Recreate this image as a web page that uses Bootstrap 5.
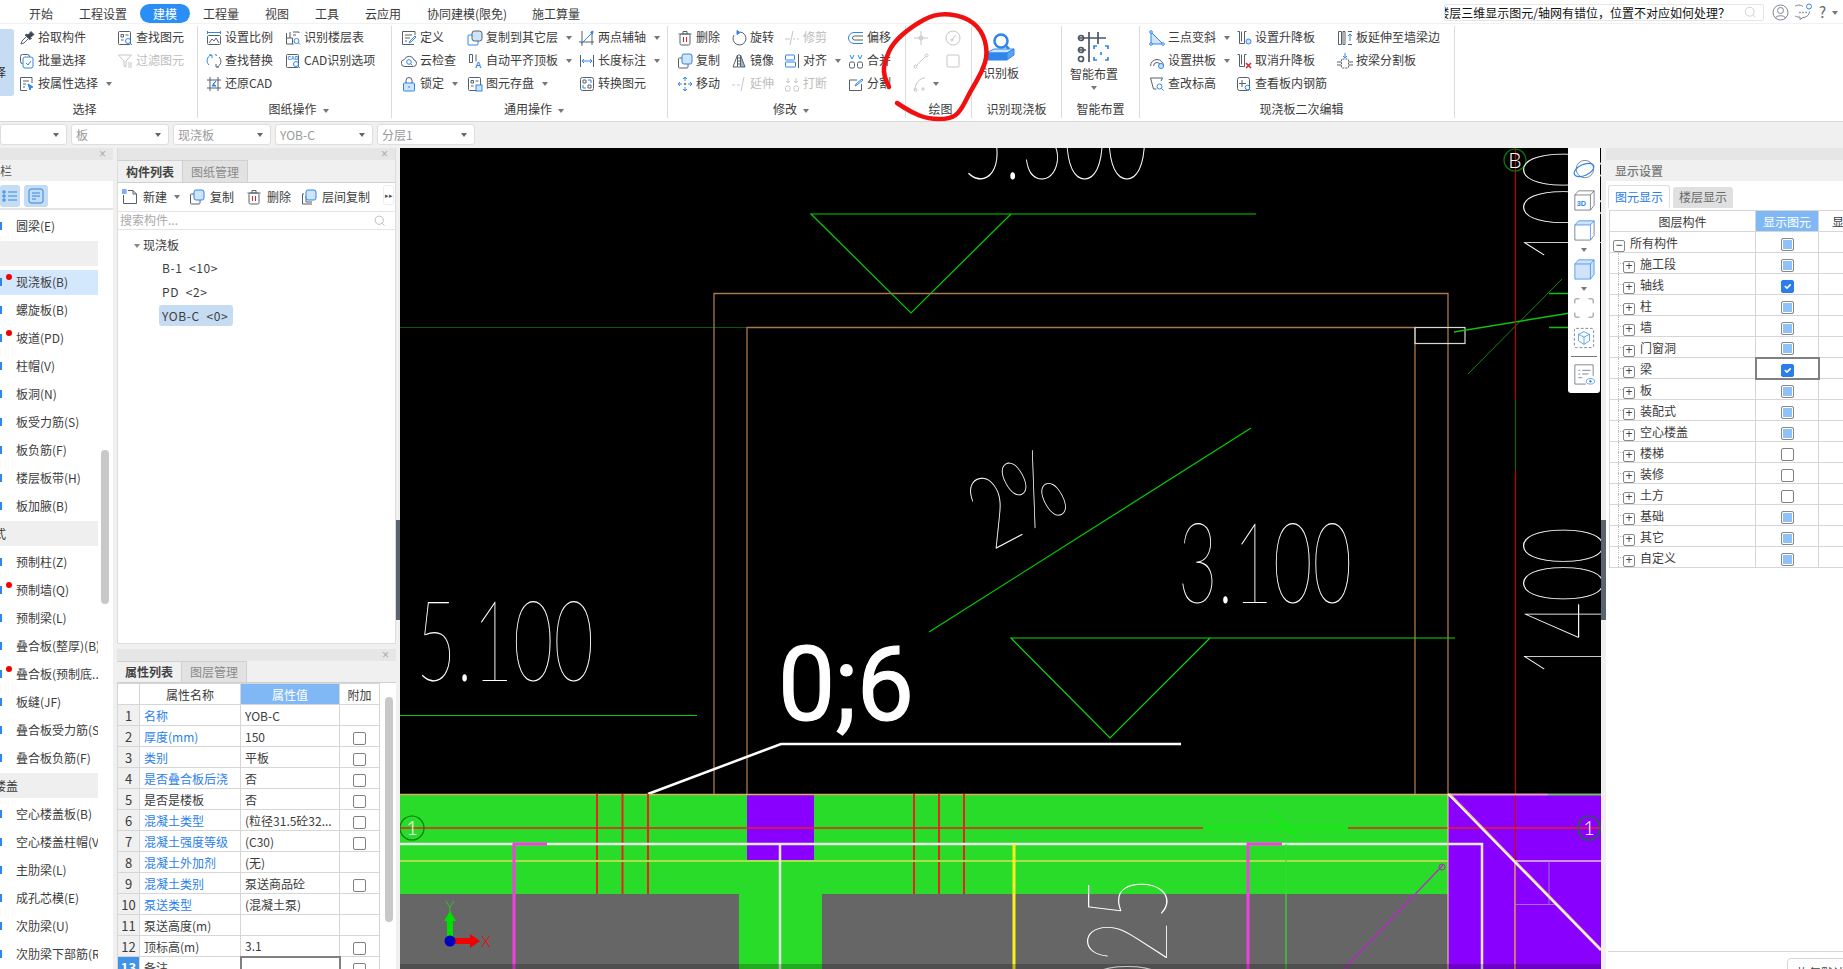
<!DOCTYPE html>
<html>
<head>
<title>建模</title>
<link href="https://cdn.jsdelivr.net/npm/bootstrap@5.3.3/dist/css/bootstrap.min.css" rel="stylesheet">
<style>
body { width:1843px; height:969px; overflow:hidden; background:#fff; color:#3c3c3c; font:12px/1.2 "Noto Sans CJK SC","Liberation Sans",sans-serif; }
svg.ico { width:16px; height:16px; flex:none; fill:none; stroke:#56606b; stroke-width:1; }
svg.dim { stroke:#c6c6c6; }
.b { stroke:#2f86ea; }
.r { stroke:#e02020; }
.bf { fill:#2f86ea; stroke:#2f86ea; }
.lf { fill:#cfe3fb; stroke:#2f86ea; }
.kf { fill:#3c4650; }
.mini { font:700 5px "Liberation Sans",sans-serif; fill:#2f86ea; stroke:none; }

.top-bar { height:23px; }
.tab-txt { width:62px; height:19px; margin-top:4px; line-height:19px; text-align:center; flex:none; }
.tab-on { width:50px; background:#2b8ef5; color:#fff; border-radius:10px; }
.ask { position:absolute; left:1444px; top:4px; width:320px; height:17px; border:1px solid #e6e6e6; border-radius:2px; color:#111; overflow:hidden; justify-content:flex-end; padding-right:33px; line-height:15px; white-space:nowrap; }
.ask span { flex:none; }
.top-ico { position:absolute; top:4px; }

.rib { height:98px; border-top:1px solid #f1f1f1; }
.rgroup { height:92px; margin-top:2px; border-right:1px solid #dcdcdc; flex:none; position:relative; }
.rbody { height:73px; }
.rcol { flex:none; }
.ritem { height:23px; gap:3px; white-space:nowrap; }
.ritem.off { color:#bdbdbd; }
.caret { width:0; height:0; border:3px solid transparent; border-top:4px solid #777; border-bottom:0; margin-left:5px; flex:none; }
.rlabel { height:19px; line-height:19px; text-align:center; color:#3c3c3c; }
.rlabel .caret { display:inline-block; vertical-align:middle; margin-left:6px; }
.pick-btn { width:14px; height:67px; margin-top:3px; margin-right:5px; background:#c5dcf3; border-radius:0 3px 3px 0; flex:none; overflow:hidden; color:#333; }
.pick-btn span { display:block; margin:36px 0 0 -6px; }

.cnd-bar { height:27px; background:#f0f0f0; border-top:1px solid #d8d8d8; padding-top:2px; gap:4px; }
.cnd-bar .form-select { height:21px; min-height:0; padding:0 14px 0 4px; font-size:12px; line-height:19px; color:#999; border:1px solid #dedede; border-radius:3px; background-color:#fff; background-size:8px 8px; background-position:right 6px center; background-image:url("data:image/svg+xml,%3csvg xmlns='http://www.w3.org/2000/svg' viewBox='0 0 8 8'%3e%3cpath fill='%23666' d='M1 2h6L4 6z'/%3e%3c/svg%3e"); flex:none; width:98px; }

.work { height:821px; background:#f0f0f0; }
.gut { width:4px; flex:none; }
.gut-mark { width:4px; height:100px; margin-top:372px; background:#5a6470; }
.gray-head { height:12px; background:#e6e6e6; position:relative; }
.gray-head i { position:absolute; right:7px; top:1px; font:normal 12px/10px "Liberation Sans",sans-serif; color:#aaa; }

.nav-pane { width:113px; flex:none; background:#fff; }
.nav-title { height:21px; line-height:21px; background:#f0f0f0; color:#555; font-size:12px; overflow:hidden; white-space:nowrap; }
.nav-title span { margin-left:-24px; display:inline-block; }
.nav-tools { height:29px; border-bottom:2px solid #e4e4e4; gap:4px; padding-top:4px; }
.tool-on { height:22px; background:#c5dcf3; border-radius:3px; flex:none; justify-content:center; align-items:center; display:flex; }
.nav-rows { width:98px; padding-top:2px; }
.nav-row { height:28px; line-height:28px; padding-left:16px; white-space:nowrap; overflow:hidden; position:relative; }
.nav-row.sel::before { content:""; position:absolute; left:0; right:0; top:2px; bottom:1px; background:#d3e7fd; z-index:0; }
.nav-row span { position:relative; }
.nav-sec { height:25px; line-height:25px; margin:1px 0 2px; background:#efefef; white-space:nowrap; overflow:hidden; }
.nav-sec span { margin-left:-6px; display:inline-block; }
.nav-dot { position:absolute; left:6px; top:6px; width:6px; height:6px; border-radius:50%; background:#f00000; }
.nav-stub { position:absolute; left:0; top:10px; width:2px; height:8px; background:#2f86ea; }
.nav-track { width:15px; flex:none; padding-left:3px; }
.nav-thumb { width:8px; height:154px; margin-top:240px; background:#c8c8c8; border-radius:4px; }

.mid-pane { width:279px; flex:none; }
.list-pane { height:496px; background:#fff; border:1px solid #dcdcdc; border-top:0; }
.prop-pane { height:320px; margin-top:5px; background:#fff; overflow:hidden; }
.pane-tabs { height:23px; background:#f0f0f0; border-bottom:1px solid #d0d0d0; }
.prop-pane .pane-tabs { height:22px; }
.pane-tab { width:65px; height:23px; line-height:21px; text-align:center; border:1px solid #d0d0d0; flex:none; }
.prop-pane .pane-tab { height:22px; line-height:20px; }
.pane-tab.act { font-weight:700; background:#f0f0f0; color:#444; border-left:0; }
.pane-tab.idle { background:#e2e2e2; color:#8a8a8a; border-left:0; }
.list-tools { height:28px; position:relative; }
.list-tool { gap:5px; white-space:nowrap; flex:none; }
.more-btn { position:absolute; right:1px; top:2px; width:11px; height:20px; border:1px solid #eee; border-radius:3px; background:#fff; font-size:7px; line-height:18px; text-align:center; color:#555; }
.find-row { height:19px; border-top:1px solid #e4e4e4; border-bottom:1px solid #e4e4e4; color:#aaa; padding:0 9px 0 2px; }
.tree-top { padding:7px 0 0 16px; height:27px; line-height:16px; }
.tree-top .caret { margin:0 3px 2px 0; display:inline-block; border-top-color:#888; }
.tree-leaf { height:24px; line-height:21px; padding-left:44px; white-space:pre; letter-spacing:.6px; }
.tree-leaf span { display:inline-block; height:21px; padding:0 5px 0 3px; margin-left:-3px; border-radius:3px; }
.tree-leaf.sel span { background:#c5dcf3; }

.prop-table, .layer-table { table-layout:fixed; border-collapse:collapse; margin:0; }
.prop-table { width:262px; }
.prop-table td, .prop-table th, .layer-table td, .layer-table th { height:21px; padding:0 4px; border:1px solid #d6d6d6; font-weight:400; white-space:nowrap; overflow:hidden; line-height:19px; color:#3c3c3c; background:#fff; vertical-align:middle; }
.prop-table th { text-align:center; }
.prop-table .no { background:#f0f0f0; text-align:center; padding:0; font-size:13px; }
.prop-table .no.on { background:#3f93ea; color:#fff; font-weight:700; }
.prop-table .blue { color:#2b7fe8; }
.prop-table .hd, .layer-table .hd { background:#7fb8f5; color:#fff; }
.prop-table .mid { text-align:center; padding:0; }
.prop-table .cur { border:2px solid #808080; }
.prop-scroll { width:17px; flex:none; padding-left:5px; }
.prop-thumb { width:8px; height:225px; margin-top:14px; background:#c8c8c8; border-radius:4px; }
.form-check-input.ck { width:13px; height:13px; margin:0; vertical-align:middle; border:1px solid #808080; border-radius:2px; float:none; display:inline-block; }
.form-check-input.ck:checked { background-color:#2b7de9; border-color:#2b7de9; }
.form-check-input.ck.part { background-color:#8fc1fb; box-shadow:inset 0 0 0 1px #fff; border-color:#888; }

.cad-view { width:1201px; flex:none; position:relative; overflow:hidden; background:#000; }
.cad-view > svg { display:block; }
.cad { font-family:Lato,Roboto,sans-serif; font-weight:100; font-size:112px; fill:#fff; }
.float-bar { position:absolute; right:1px; top:0; width:32px; height:245px; background:#fff; border-radius:0 0 3px 3px; padding-top:11px; }
.float-bar svg.ico { width:22px; height:22px; stroke-width:.8; display:block; margin:0 auto 8px; }
.float-bar .caret { margin:-1px auto 6px; display:block; }
.float-bar hr { margin:-1px 3px 6px; border-top:1px solid #777; opacity:1; }

.show-pane { width:237px; flex:none; background:#fff; position:relative; }
.show-title { height:21px; line-height:21px; background:#f0f0f0; padding-left:9px; color:#777; font-weight:500; }
.show-tabs { height:25px; padding:4px 0 0 2px; gap:3px; border-bottom:0; }
.show-tabs .nav-link, .show-tabs .nav-link.active { height:23px; line-height:21px; padding:0; width:62px; text-align:center; font-size:12px; color:#2b7de9; border:1px solid #ddd; border-bottom-color:#fff; border-radius:3px 3px 0 0; background:#fff; }
.show-tabs .nav-link.idle { width:60px; margin-top:2px; height:21px; line-height:19px; background:#e0e0e0; color:#6a6a6a; border:0; }
.layer-table { width:260px; margin:4px 0 0 3px; }
.layer-table th { text-align:center; }
.layer-table .mid { text-align:center; padding:0; }
.layer-table .cur { border:2px solid #808080; }
.layer-name { padding:0 !important; position:relative; }
.layer-name:not(.root)::before { content:""; position:absolute; left:8px; top:0; bottom:0; border-left:1px dotted #bbb; }
.layer-name:not(.root)::after { content:""; position:absolute; left:8px; top:10px; width:5px; border-top:1px dotted #bbb; }
.layer-name .plus { display:inline-block; width:12px; height:12px; border:1px solid #888; border-radius:2px; text-align:center; font:12px/9px "Liberation Sans",sans-serif; color:#444; margin:0 5px 0 13px; vertical-align:-1px; background:#fff; }
.layer-name.root .plus { margin:0 5px 0 3px; }
.tail-line { border-top:1px solid #d6d6d6; position:absolute; left:2px; right:0; top:803px; }
.reset-btn { position:absolute; left:181px; top:810px; width:70px; height:20px; border:1px solid #d6d6d6; border-radius:4px; background:#fff; padding:6px 0 0 9px; color:#444; font-size:12px; line-height:15px; white-space:nowrap; }
.ink { position:absolute; left:0; top:0; pointer-events:none; }
</style>
</head>
<body>
<svg width="0" height="0" class="position-absolute">
<defs>
<symbol id="i-pick" viewBox="0 0 16 16"><path d="M2 14l1-3 5-5 2 2-5 5z"/><path class="kf" d="M8 4l1 1 3-3.500 3 3-3.500 3 1 1-2 1-4.500-4.500z"/></symbol>
<symbol id="i-find" viewBox="0 0 16 16"><rect x="1.500" y="1.500" width="12" height="13" rx="1"/><path d="M4 4.500h2.500v2.500H4zM8.500 5h3M4 10h2.500"/><circle class="b" cx="11" cy="11" r="2.500"/><path class="b" d="M13 13l2 2"/></symbol>
<symbol id="i-batch" viewBox="0 0 16 16"><rect x="1.500" y="1.500" width="9" height="9" rx="2"/><rect class="b" x="4" y="4" width="10" height="11" rx="2" fill="#fff"/><path class="b" d="M7 10l2 2 3-4"/></symbol>
<symbol id="i-filter" viewBox="0 0 16 16"><path d="M1.500 2h13L9 8v6l-2-1V8zM11 10h4M11 12h4M11 14h4"/></symbol>
<symbol id="i-attr" viewBox="0 0 16 16"><path d="M13 7V1.500H1.500v13H8M4 5h6M4 8h3M4 11h2"/><path class="bf" d="M9 8l5 3-2 .6-1 2.400z"/></symbol>
<symbol id="i-scale" viewBox="0 0 16 16"><path class="b" d="M1.500 1v3M14.500 1v3M1.500 2.500h13"/><rect x="1.500" y="5.500" width="13" height="9" rx="1"/><path d="M3 13l3-4 2 2 2-3 3 5"/></symbol>
<symbol id="i-swap" viewBox="0 0 16 16"><path class="b" d="M5 2a6 6 0 0 0-2 10M3 2h3v3"/><path d="M11 14a6 6 0 0 0 2-10M13 14h-3v-3M9 1.500l2 1"/></symbol>
<symbol id="i-restore" viewBox="0 0 16 16"><path d="M4 1v14M12 1v14M1 4h14M1 12h14"/><path class="bf" d="M10 5L7 8l3 2-4 0z"/></symbol>
<symbol id="i-floor" viewBox="0 0 16 16"><path d="M1.500 3v11h7M1.500 8h6v6M5 2v6M8 2h6v1M8 5h3"/><circle class="b" cx="11.500" cy="11" r="2.500"/><path class="b" d="M13.500 13l1.500 1.500"/></symbol>
<symbol id="i-cadopt" viewBox="0 0 16 16"><rect x="1.500" y="1.500" width="12" height="13" rx="1"/><text class="mini" x="2.500" y="7">CAD</text><circle class="b" cx="11" cy="11" r="2.500"/><path class="b" d="M13 13l2 2"/></symbol>
<symbol id="i-def" viewBox="0 0 16 16"><path d="M14 5V1.500H1.500v13H13M4 5h7M4 8h5M4 11h2"/><path class="b" d="M8 13l1-2 5-5 1 1-5 5z"/></symbol>
<symbol id="i-cloud" viewBox="0 0 16 16"><path d="M4 13.500a3.500 3.500 0 0 1-.5-7 5 5 0 0 1 9.500.5 3.300 3.300 0 0 1-.5 6.500z"/><circle class="b" cx="8" cy="9" r="2.300"/><path class="b" d="M9.500 10.500l2 2"/></symbol>
<symbol id="i-lock" viewBox="0 0 16 16"><rect class="lf" x="2.500" y="7" width="11" height="8" rx="1"/><path d="M5 7V4.500a3 3 0 0 1 6 0V7"/><path class="b" d="M8 10v2"/></symbol>
<symbol id="i-copylayer" viewBox="0 0 16 16"><path d="M5 5H2a1 1 0 0 0-1 1v8a1 1 0 0 0 1 1h8a1 1 0 0 0 1-1v-3" class="b"/><rect x="5" y="1" width="10" height="10" rx="2.500" fill="#cfe3fb"/></symbol>
<symbol id="i-align" viewBox="0 0 16 16"><path d="M2.500 1.500v8h3v-8zM9 1.500v7"/><text class="mini" style="font-size:9px" x="8" y="15">A</text></symbol>
<symbol id="i-save" viewBox="0 0 16 16"><rect x="1.500" y="1.500" width="12" height="13" rx="1"/><path d="M4 4.500h2.500V7H4zM8.500 5h3M4 10h2.500"/><rect class="lf" x="9" y="9" width="6" height="6"/></symbol>
<symbol id="i-axis" viewBox="0 0 16 16"><path d="M3 1v15M0 12h15M13 1v14"/><path class="b" d="M2 14L14 2"/><path class="bf" d="M14 1l-.5 3-2-1.500z"/></symbol>
<symbol id="i-dim" viewBox="0 0 16 16"><path d="M1.500 2v12M14.500 2v12"/><path class="b" d="M3 8h10M3 8l2-2M3 8l2 2M13 8l-2-2M13 8l-2 2"/></symbol>
<symbol id="i-conv" viewBox="0 0 16 16"><rect x="1.500" y="1.500" width="13" height="13" rx="2"/><path d="M4 4h3v3H4zM9 9h3v3H9z"/><path class="b" d="M9 4h3v3M7 12H4V9"/></symbol>
<symbol id="i-del" viewBox="0 0 16 16"><rect x="3" y="4" width="10" height="11" rx="1.500"/><path d="M1.500 4h13M6 4V1.500h4V4"/><path class="r" d="M6.500 7v5M9.500 7v5"/></symbol>
<symbol id="i-copy" viewBox="0 0 16 16"><path d="M5 5H2.500a1 1 0 0 0-1 1v8a1 1 0 0 0 1 1H10a1 1 0 0 0 1-1v-3"/><rect class="lf" x="5" y="1" width="10" height="10" rx="2"/></symbol>
<symbol id="i-move" viewBox="0 0 16 16"><path class="b" d="M8 1v4M8 11v4M1 8h4M11 8h4M6 3l2-2 2 2M6 13l2 2 2-2M3 6L1 8l2 2M13 6l2 2-2 2"/><circle cx="8" cy="8" r=".8"/></symbol>
<symbol id="i-rot" viewBox="0 0 16 16"><path d="M9 2a6.500 6.500 0 1 1-6 3"/><path class="bf" d="M6 .5v4l3-2z"/></symbol>
<symbol id="i-mirror" viewBox="0 0 16 16"><path d="M6.500 2L2 14h4.500z"/><path d="M8 1v14" stroke-dasharray="2 1"/><path fill="#9fb6cf" d="M9.500 2L14 14H9.500z"/></symbol>
<symbol id="i-trim" viewBox="0 0 16 16"><path d="M1 9h5M9 9h2M13 9h2M9 1L6 15"/></symbol>
<symbol id="i-extend" viewBox="0 0 16 16"><path d="M1 9h3M6 9h3M13 1l-3 14"/></symbol>
<symbol id="i-alignb" viewBox="0 0 16 16"><rect class="b" x="1.500" y="2" width="9" height="5" rx=".5"/><rect class="b" x="1.500" y="9" width="10" height="5" rx=".5"/><path d="M14.500 1v14"/></symbol>
<symbol id="i-break" viewBox="0 0 16 16"><rect x="1.500" y="10" width="4.500" height="5" rx="1.500"/><rect x="10" y="10" width="4.500" height="5" rx="1.500"/><path d="M4 2v5M2 5l2 2 2-2M12 2v5M10 5l2 2 2-2"/></symbol>
<symbol id="i-offset" viewBox="0 0 16 16"><path class="b" d="M15 2.500H6a5.500 5.500 0 0 0 0 11h9"/><path d="M15 6H6.500a2 2 0 0 0 0 4H15"/></symbol>
<symbol id="i-merge" viewBox="0 0 16 16"><rect x="1.500" y="9" width="5" height="6" rx="1.500"/><rect x="9.500" y="9" width="5" height="6" rx="1.500"/><path class="b" d="M2 2l2 4 2-4M10 2l2 4 2-4"/></symbol>
<symbol id="i-split" viewBox="0 0 16 16"><path d="M9 4H1.500v10.500h12V8"/><path class="b" d="M7 10l1-2 6-5 1 1-6 5z"/></symbol>
<symbol id="i-pt" viewBox="0 0 16 16"><path d="M8 1v14M1 8h14"/><circle cx="8" cy="8" r="2"/></symbol>
<symbol id="i-gauge" viewBox="0 0 16 16"><circle cx="8" cy="8" r="7"/><path d="M7 10l4-5"/><circle cx="7" cy="10" r="1"/></symbol>
<symbol id="i-line" viewBox="0 0 16 16"><path d="M3 13L13 3"/><circle cx="2.500" cy="13.500" r="1.500"/><circle cx="13.500" cy="2.500" r="1.500"/></symbol>
<symbol id="i-rect" viewBox="0 0 16 16"><rect x="2" y="2" width="12" height="12" rx="1"/></symbol>
<symbol id="i-arc" viewBox="0 0 16 16"><path d="M2 14C2 7 7 2 12 2"/><circle cx="2.500" cy="14" r="1.500"/><circle cx="10" cy="13" r="1.200"/></symbol>
<symbol id="i-slope" viewBox="0 0 16 16"><path class="lf" d="M2 2v12h12z"/><circle class="b" cx="2" cy="14" r="1.300" fill="#fff"/><circle class="b" cx="14" cy="14" r="1.300" fill="#fff"/><circle class="b" cx="2" cy="2" r="1.300" fill="#fff"/></symbol>
<symbol id="i-arch" viewBox="0 0 16 16"><path d="M1.500 13a6.500 6.500 0 0 1 13 0M4.500 13a3.500 3.500 0 0 1 7 0"/><circle class="lf" cx="12" cy="13" r="2.500"/></symbol>
<symbol id="i-elev" viewBox="0 0 16 16"><path d="M1.500 2h12L12 5M1.500 2l3 11h3"/><circle class="b" cx="10.500" cy="10.500" r="2.500"/><path class="b" d="M12.500 12.500l2 2"/></symbol>
<symbol id="i-rise" viewBox="0 0 16 16"><path d="M1.500 1.500h2v12h5v-12h2M5.500 1.500v10"/><circle class="lf" cx="12.500" cy="11.500" r="2.500"/></symbol>
<symbol id="i-unrise" viewBox="0 0 16 16"><path d="M1.500 1.500h2v12h5v-12h2M5.500 1.500v10"/><path class="r" d="M10 10l5 5M15 10l-5 5" stroke-width="1.500"/></symbol>
<symbol id="i-rebar" viewBox="0 0 16 16"><rect x="1.500" y="1.500" width="12" height="13" rx="2"/><path d="M6 4v7M3 7.500h7"/><circle class="b" cx="11.500" cy="11.500" r="2.300"/><path class="b" d="M13.300 13.300l1.500 1.500"/></symbol>
<symbol id="i-extw" viewBox="0 0 16 16"><path d="M1.500 1.500h3v13h-3zM6 1.500h2v13H6zM11 1.500h4M11 14.500h4"/><path class="b" d="M13 11V4M11 6l2-2 2 2"/></symbol>
<symbol id="i-splitb" viewBox="0 0 16 16"><rect x="4.500" y="6" width="7" height="9" rx="1" stroke-dasharray="2 1"/><path d="M0 9h4M12 9h4M0 12h4M12 12h4"/><path class="b" d="M8 0v5M6 3l2 2 2-2"/></symbol>
<symbol id="i-new" viewBox="0 0 16 16"><path d="M6 1.500h5l3.500 3.500v9.500h-13V6M11 1.500V5h3.500"/><path class="b" d="M0 0h5M0 2h5M0 4h5M1 0v5M3 0v5" stroke-width=".8"/></symbol>
<symbol id="i-layercopy" viewBox="0 0 16 16"><path d="M3 5H1.500v10H11M5 7v6h6"/><rect class="lf" x="5" y="1" width="10" height="10" rx="2"/></symbol>
<symbol id="i-search" viewBox="0 0 16 16"><circle cx="7" cy="7" r="5.500"/><path d="M11 11l3 3"/></symbol>
<symbol id="i-list" viewBox="0 0 16 16"><path class="b" d="M1 3h2v2H1zM1 7h2v2H1zM1 11h2v2H1zM6 4h9M6 8h9M6 12h9"/></symbol>
<symbol id="i-form" viewBox="0 0 16 16"><rect class="b" x="1" y="1" width="14" height="14" rx="2"/><path class="b" d="M4 5h8M4 8h8M4 11h4"/></symbol>
<symbol id="i-orbit" viewBox="0 0 24 24"><circle cx="13" cy="11" r="9.500"/><ellipse class="b" cx="12" cy="12" rx="11.500" ry="6" transform="rotate(-25 12 12)" stroke-width="1.300"/></symbol>
<symbol id="i-3d" viewBox="0 0 24 24"><path d="M2 6.500h17V23H2zM2 6.500L6 2h17v16l-4 5M19 6.500L23 2"/><text class="mini" style="font-size:8px" x="4" y="19">3D</text></symbol>
<symbol id="i-cube" viewBox="0 0 24 24"><path d="M2 6.500V23h17l4-5V2"/><path class="lf" d="M2 6.500L6 2h17l-4 4.500zM19 6.500V23"/></symbol>
<symbol id="i-cube2" viewBox="0 0 24 24"><path class="lf" d="M2 6.500L6 2h17v16l-4 5H2z"/><path class="b" d="M2 6.500h17V23M19 6.500L23 2"/></symbol>
<symbol id="i-frame" viewBox="0 0 24 24"><path d="M2 7V3a1 1 0 0 1 1-1h4M17 2h4a1 1 0 0 1 1 1v4M22 17v4a1 1 0 0 1-1 1h-4M7 22H3a1 1 0 0 1-1-1v-4"/></symbol>
<symbol id="i-dashcube" viewBox="0 0 24 24"><rect x="1.500" y="1.500" width="21" height="21" rx="2" stroke-dasharray="3 2"/><path class="b" d="M12 5l6 3v7l-6 4-6-4V8zM6 8l6 3 6-3M12 11v8"/></symbol>
<symbol id="i-listeye" viewBox="0 0 24 24"><path d="M22 14V2H2v21h12M6 8h2M10 8h9M6 12h2M10 12h7M6 16h4"/><ellipse class="b" cx="19" cy="20" rx="4.500" ry="3"/><circle class="bf" cx="19" cy="20" r="1"/></symbol>
</defs>
</svg>

<div class="top-bar d-flex position-relative">
  <div class="flex-none" style="width:10px"></div>
  <div class="tab-txt" style="width:62px">开始</div>
  <div class="tab-txt" style="width:62px">工程设置</div>
  <div class="tab-txt tab-on" style="margin-left:6px">建模</div>
  <div class="tab-txt" style="width:62px">工程量</div>
  <div class="tab-txt" style="width:50px">视图</div>
  <div class="tab-txt" style="width:50px">工具</div>
  <div class="tab-txt" style="width:62px">云应用</div>
  <div class="tab-txt" style="width:106px">协同建模(限免)</div>
  <div class="tab-txt" style="width:72px">施工算量</div>
  <div class="ask d-flex"><span>楼层三维显示图元/轴网有错位，位置不对应如何处理？</span></div>
  <svg class="ico top-ico dim" style="left:1744px;top:6px;width:13px;height:13px"><use href="#i-search"/></svg>
  <svg class="top-ico" style="left:1772px" width="17" height="17" viewBox="0 0 17 17" fill="none" stroke="#7b8490"><circle cx="8.500" cy="8.500" r="7.500"/><circle cx="8.500" cy="6.500" r="3"/><path d="M3.500 14c1-3 9-3 10 0"/></svg>
  <svg class="top-ico" style="left:1795px;top:3px" width="18" height="17" viewBox="0 0 18 17" fill="none" stroke="#7b8490"><path d="M8 3.500a6.500 6 0 1 0-3 10.500v2.500l3-2a6.500 6 0 0 0 6.500-6"/><circle cx="5" cy="9.500" r=".5"/><circle cx="8" cy="9.500" r=".5"/><circle cx="11" cy="9.500" r=".5"/><circle cx="14" cy="3.500" r="2.500" stroke="#2f86ea"/></svg>
  <span class="top-ico" style="left:1819px;top:3px;font-size:15px;line-height:17px;color:#666">?</span>
  <span class="caret top-ico" style="left:1827px;top:11px"></span>
</div>

<div class="rib d-flex position-relative">
  <div class="rgroup" style="width:198px">
    <div class="rbody d-flex">
      <div class="pick-btn"><span>择</span></div>
      <div class="rcol" style="width:98px">
        <div class="ritem d-flex align-items-center"><svg class="ico"><use href="#i-pick"/></svg>拾取构件</div>
        <div class="ritem d-flex align-items-center"><svg class="ico"><use href="#i-batch"/></svg>批量选择</div>
        <div class="ritem d-flex align-items-center"><svg class="ico"><use href="#i-attr"/></svg>按属性选择<i class="caret"></i></div>
      </div>
      <div class="rcol">
        <div class="ritem d-flex align-items-center"><svg class="ico"><use href="#i-find"/></svg>查找图元</div>
        <div class="ritem off d-flex align-items-center"><svg class="ico dim"><use href="#i-filter"/></svg>过滤图元</div>
      </div>
    </div>
    <div class="rlabel" style="padding-right:28px">选择</div>
  </div>
  <div class="rgroup" style="width:194px;padding-left:8px">
    <div class="rbody d-flex">
      <div class="rcol" style="width:79px">
        <div class="ritem d-flex align-items-center"><svg class="ico"><use href="#i-scale"/></svg>设置比例</div>
        <div class="ritem d-flex align-items-center"><svg class="ico"><use href="#i-swap"/></svg>查找替换</div>
        <div class="ritem d-flex align-items-center"><svg class="ico"><use href="#i-restore"/></svg>还原CAD</div>
      </div>
      <div class="rcol">
        <div class="ritem d-flex align-items-center"><svg class="ico"><use href="#i-floor"/></svg>识别楼层表</div>
        <div class="ritem d-flex align-items-center"><svg class="ico"><use href="#i-cadopt"/></svg>CAD识别选项</div>
      </div>
    </div>
    <div class="rlabel">图纸操作<i class="caret"></i></div>
  </div>
  <div class="rgroup" style="width:276px;padding-left:9px">
    <div class="rbody d-flex">
      <div class="rcol" style="width:66px">
        <div class="ritem d-flex align-items-center"><svg class="ico"><use href="#i-def"/></svg>定义</div>
        <div class="ritem d-flex align-items-center"><svg class="ico"><use href="#i-cloud"/></svg>云检查</div>
        <div class="ritem d-flex align-items-center"><svg class="ico"><use href="#i-lock"/></svg>锁定<i class="caret"></i></div>
      </div>
      <div class="rcol" style="width:112px">
        <div class="ritem d-flex align-items-center"><svg class="ico"><use href="#i-copylayer"/></svg>复制到其它层<i class="caret"></i></div>
        <div class="ritem d-flex align-items-center"><svg class="ico"><use href="#i-align"/></svg>自动平齐顶板<i class="caret"></i></div>
        <div class="ritem d-flex align-items-center"><svg class="ico"><use href="#i-save"/></svg>图元存盘<i class="caret"></i></div>
      </div>
      <div class="rcol">
        <div class="ritem d-flex align-items-center"><svg class="ico"><use href="#i-axis"/></svg>两点辅轴<i class="caret"></i></div>
        <div class="ritem d-flex align-items-center"><svg class="ico"><use href="#i-dim"/></svg>长度标注<i class="caret"></i></div>
        <div class="ritem d-flex align-items-center"><svg class="ico"><use href="#i-conv"/></svg>转换图元</div>
      </div>
    </div>
    <div class="rlabel">通用操作<i class="caret"></i></div>
  </div>
  <div class="rgroup" style="width:238px;padding-left:9px">
    <div class="rbody d-flex">
      <div class="rcol" style="width:54px">
        <div class="ritem d-flex align-items-center"><svg class="ico"><use href="#i-del"/></svg>删除</div>
        <div class="ritem d-flex align-items-center"><svg class="ico"><use href="#i-copy"/></svg>复制</div>
        <div class="ritem d-flex align-items-center"><svg class="ico"><use href="#i-move"/></svg>移动</div>
      </div>
      <div class="rcol" style="width:53px">
        <div class="ritem d-flex align-items-center"><svg class="ico"><use href="#i-rot"/></svg>旋转</div>
        <div class="ritem d-flex align-items-center"><svg class="ico"><use href="#i-mirror"/></svg>镜像</div>
        <div class="ritem off d-flex align-items-center"><svg class="ico dim"><use href="#i-extend"/></svg>延伸</div>
      </div>
      <div class="rcol" style="width:64px">
        <div class="ritem off d-flex align-items-center"><svg class="ico dim"><use href="#i-trim"/></svg>修剪</div>
        <div class="ritem d-flex align-items-center"><svg class="ico"><use href="#i-alignb"/></svg>对齐<i class="caret"></i></div>
        <div class="ritem off d-flex align-items-center"><svg class="ico dim"><use href="#i-break"/></svg>打断</div>
      </div>
      <div class="rcol">
        <div class="ritem d-flex align-items-center"><svg class="ico"><use href="#i-offset"/></svg>偏移</div>
        <div class="ritem d-flex align-items-center"><svg class="ico"><use href="#i-merge"/></svg>合并</div>
        <div class="ritem d-flex align-items-center"><svg class="ico"><use href="#i-split"/></svg>分割</div>
      </div>
    </div>
    <div class="rlabel">修改<i class="caret"></i></div>
  </div>
  <div class="rgroup" style="width:66px;padding-left:7px">
    <div class="rbody d-flex">
      <div class="rcol" style="width:32px">
        <div class="ritem d-flex align-items-center"><svg class="ico dim"><use href="#i-pt"/></svg></div>
        <div class="ritem d-flex align-items-center"><svg class="ico dim"><use href="#i-line"/></svg></div>
        <div class="ritem d-flex align-items-center"><svg class="ico dim"><use href="#i-arc"/></svg><i class="caret" style="margin-left:1px"></i></div>
      </div>
      <div class="rcol">
        <div class="ritem d-flex align-items-center"><svg class="ico dim"><use href="#i-gauge"/></svg></div>
        <div class="ritem d-flex align-items-center"><svg class="ico dim"><use href="#i-rect"/></svg></div>
      </div>
    </div>
    <div class="rlabel" style="margin-left:-3px">绘图</div>
  </div>
  <div class="rgroup" style="width:90px">
    <div class="rbody" style="padding:6px 0 0 13px">
      <svg width="30" height="30" viewBox="0 0 30 30" fill="none" stroke="#2f86ea" class="d-block"><circle cx="16" cy="9" r="6.500" stroke-width="2.500"/><path d="M21 14l3 3" stroke-width="2.500"/><path fill="#cfe3fb" d="M1 21l8-4h20l-7 4z"/><path fill="#2f86ea" d="M1 21h21v7H1z"/><path fill="#5ba2f0" d="M22 21l7-4v6l-7 5z"/></svg>
      <div style="margin:4px 0 0 -2px">识别板</div>
    </div>
    <div class="rlabel">识别现浇板</div>
  </div>
  <div class="rgroup" style="width:78px">
    <div class="rbody" style="padding:5px 0 0 8px">
      <svg width="48" height="32" viewBox="0 0 48 32" fill="none" stroke="#4b5563" stroke-width="1.700" class="d-block"><path d="M8 7h28M8 19h8M19 1v30M28 1v12"/><circle cx="11" cy="7" r="2.500"/><circle cx="11" cy="19" r="2.500"/><circle cx="11" cy="28" r="2.500"/><path stroke="#2f86ea" d="M24 18v-3h3M35 15h3v3M38 26v3h-3M27 29h-3v-3M31 21v3"/></svg>
      <div class="mt-1">智能布置</div>
      <i class="caret d-block" style="margin:5px 0 0 21px"></i>
    </div>
    <div class="rlabel">智能布置</div>
  </div>
  <div class="rgroup" style="width:315px;padding-left:9px">
    <div class="rbody d-flex">
      <div class="rcol" style="width:87px">
        <div class="ritem d-flex align-items-center"><svg class="ico"><use href="#i-slope"/></svg>三点变斜<i class="caret"></i></div>
        <div class="ritem d-flex align-items-center"><svg class="ico"><use href="#i-arch"/></svg>设置拱板<i class="caret"></i></div>
        <div class="ritem d-flex align-items-center"><svg class="ico"><use href="#i-elev"/></svg>查改标高</div>
      </div>
      <div class="rcol" style="width:101px">
        <div class="ritem d-flex align-items-center"><svg class="ico"><use href="#i-rise"/></svg>设置升降板</div>
        <div class="ritem d-flex align-items-center"><svg class="ico"><use href="#i-unrise"/></svg>取消升降板</div>
        <div class="ritem d-flex align-items-center"><svg class="ico"><use href="#i-rebar"/></svg>查看板内钢筋</div>
      </div>
      <div class="rcol">
        <div class="ritem d-flex align-items-center"><svg class="ico"><use href="#i-extw"/></svg>板延伸至墙梁边</div>
        <div class="ritem d-flex align-items-center"><svg class="ico"><use href="#i-splitb"/></svg>按梁分割板</div>
      </div>
    </div>
    <div class="rlabel">现浇板二次编辑</div>
  </div>
</div>

<div class="cnd-bar d-flex">
  <select class="form-select" style="width:67px"><option></option></select>
  <select class="form-select"><option>板</option></select>
  <select class="form-select"><option>现浇板</option></select>
  <select class="form-select"><option>YOB-C</option></select>
  <select class="form-select"><option>分层1</option></select>
</div>

<div class="work d-flex">
  <div class="nav-pane">
    <div class="gray-head"><i>×</i></div>
    <div class="nav-title"><span>导航栏</span></div>
    <div class="nav-tools d-flex">
      <div class="tool-on" style="width:20px"><svg class="ico"><use href="#i-list"/></svg></div>
      <div class="tool-on" style="width:24px"><svg class="ico"><use href="#i-form"/></svg></div>
    </div>
    <div class="d-flex">
      <div class="nav-rows">
        <div class="nav-row"><i class="nav-stub"></i><span>圆梁(E)</span></div>
        <div class="nav-sec">&nbsp;</div>
        <div class="nav-row sel"><i class="nav-stub"></i><i class="nav-dot"></i><span>现浇板(B)</span></div>
        <div class="nav-row"><i class="nav-stub"></i><span>螺旋板(B)</span></div>
        <div class="nav-row"><i class="nav-stub"></i><i class="nav-dot"></i><span>坡道(PD)</span></div>
        <div class="nav-row"><i class="nav-stub"></i><span>柱帽(V)</span></div>
        <div class="nav-row"><i class="nav-stub"></i><span>板洞(N)</span></div>
        <div class="nav-row"><i class="nav-stub"></i><span>板受力筋(S)</span></div>
        <div class="nav-row"><i class="nav-stub"></i><span>板负筋(F)</span></div>
        <div class="nav-row"><i class="nav-stub"></i><span>楼层板带(H)</span></div>
        <div class="nav-row"><i class="nav-stub"></i><span>板加腋(B)</span></div>
        <div class="nav-sec"><span>式</span></div>
        <div class="nav-row"><i class="nav-stub"></i><span>预制柱(Z)</span></div>
        <div class="nav-row"><i class="nav-stub"></i><i class="nav-dot"></i><span>预制墙(Q)</span></div>
        <div class="nav-row"><i class="nav-stub"></i><span>预制梁(L)</span></div>
        <div class="nav-row"><i class="nav-stub"></i><span>叠合板(整厚)(B)</span></div>
        <div class="nav-row"><i class="nav-stub"></i><i class="nav-dot"></i><span>叠合板(预制底...</span></div>
        <div class="nav-row"><i class="nav-stub"></i><span>板缝(JF)</span></div>
        <div class="nav-row"><i class="nav-stub"></i><span>叠合板受力筋(S)</span></div>
        <div class="nav-row"><i class="nav-stub"></i><span>叠合板负筋(F)</span></div>
        <div class="nav-sec"><span>楼盖</span></div>
        <div class="nav-row"><i class="nav-stub"></i><span>空心楼盖板(B)</span></div>
        <div class="nav-row"><i class="nav-stub"></i><span>空心楼盖柱帽(V)</span></div>
        <div class="nav-row"><i class="nav-stub"></i><span>主肋梁(L)</span></div>
        <div class="nav-row"><i class="nav-stub"></i><span>成孔芯模(E)</span></div>
        <div class="nav-row"><i class="nav-stub"></i><span>次肋梁(U)</span></div>
        <div class="nav-row"><i class="nav-stub"></i><span>次肋梁下部筋(R)</span></div>
      </div>
      <div class="nav-track"><div class="nav-thumb"></div></div>
    </div>
  </div>
  <div class="gut"></div>

  <div class="mid-pane">
    <div class="list-pane">
      <div class="gray-head"><i>×</i></div>
      <div class="pane-tabs d-flex"><div class="pane-tab act">构件列表</div><div class="pane-tab idle">图纸管理</div></div>
      <div class="list-tools d-flex align-items-center">
        <div class="list-tool d-flex align-items-center" style="margin-left:4px;width:67px"><svg class="ico"><use href="#i-new"/></svg>新建<i class="caret" style="margin-left:2px"></i></div>
        <div class="list-tool d-flex align-items-center" style="width:57px"><svg class="ico"><use href="#i-copy"/></svg>复制</div>
        <div class="list-tool d-flex align-items-center" style="width:55px"><svg class="ico"><use href="#i-del"/></svg>删除</div>
        <div class="list-tool d-flex align-items-center"><svg class="ico"><use href="#i-layercopy"/></svg>层间复制</div>
        <div class="more-btn">▸▸</div>
      </div>
      <div class="find-row d-flex align-items-center justify-content-between"><span>搜索构件...</span><svg class="ico dim" style="width:12px;height:12px;stroke:#aaa"><use href="#i-search"/></svg></div>
      <div class="tree-top"><i class="caret"></i>现浇板</div>
      <div class="tree-leaf"><span>B-1  &lt;10&gt;</span></div>
      <div class="tree-leaf"><span>PD  &lt;2&gt;</span></div>
      <div class="tree-leaf sel"><span>YOB-C  &lt;0&gt;</span></div>
    </div>
    <div class="prop-pane">
      <div class="gray-head"><i>×</i></div>
      <div class="pane-tabs d-flex"><div class="pane-tab act">属性列表</div><div class="pane-tab idle">图层管理</div></div>
      <div class="d-flex">
        <table class="prop-table">
          <colgroup><col style="width:22px"><col style="width:101px"><col style="width:99px"><col style="width:40px"></colgroup>
          <tr><th></th><th>属性名称</th><th class="hd">属性值</th><th>附加</th></tr>
          <tr><td class="no">1</td><td class="blue">名称</td><td>YOB-C</td><td></td></tr>
          <tr><td class="no">2</td><td class="blue">厚度(mm)</td><td>150</td><td class="mid"><input class="form-check-input ck" type="checkbox"></td></tr>
          <tr><td class="no">3</td><td class="blue">类别</td><td>平板</td><td class="mid"><input class="form-check-input ck" type="checkbox"></td></tr>
          <tr><td class="no">4</td><td class="blue">是否叠合板后浇</td><td>否</td><td class="mid"><input class="form-check-input ck" type="checkbox"></td></tr>
          <tr><td class="no">5</td><td>是否是楼板</td><td>否</td><td class="mid"><input class="form-check-input ck" type="checkbox"></td></tr>
          <tr><td class="no">6</td><td class="blue">混凝土类型</td><td>(粒径31.5砼32...</td><td class="mid"><input class="form-check-input ck" type="checkbox"></td></tr>
          <tr><td class="no">7</td><td class="blue">混凝土强度等级</td><td>(C30)</td><td class="mid"><input class="form-check-input ck" type="checkbox"></td></tr>
          <tr><td class="no">8</td><td class="blue">混凝土外加剂</td><td>(无)</td><td></td></tr>
          <tr><td class="no">9</td><td class="blue">混凝土类别</td><td>泵送商品砼</td><td class="mid"><input class="form-check-input ck" type="checkbox"></td></tr>
          <tr><td class="no">10</td><td class="blue">泵送类型</td><td>(混凝土泵)</td><td></td></tr>
          <tr><td class="no">11</td><td>泵送高度(m)</td><td></td><td></td></tr>
          <tr><td class="no">12</td><td>顶标高(m)</td><td>3.1</td><td class="mid"><input class="form-check-input ck" type="checkbox"></td></tr>
          <tr><td class="no on">13</td><td>备注</td><td class="cur"></td><td class="mid"><input class="form-check-input ck" type="checkbox"></td></tr>
        </table>
        <div class="prop-scroll"><div class="prop-thumb"></div></div>
      </div>
    </div>
  </div>
  <div class="gut"><div class="gut-mark"></div></div>

  <div class="cad-view">
    <svg width="1201" height="821" viewBox="400 148 1201 821" fill="none">
      <rect x="400" y="794" width="1048" height="100" fill="#2adc2a"/>
      <rect x="400" y="894" width="1048" height="75" fill="#666"/>
      <rect x="739" y="894" width="83" height="75" fill="#2adc2a"/>
      <rect x="747" y="794" width="67" height="66" fill="#8a00ff"/>
      <rect x="1448" y="794" width="153" height="175" fill="#8a00ff"/>

      <path stroke="#00d000" stroke-width="1.200" d="M1256 214H811l100 99 100-99"/>
      <path stroke="#0a5a0a" stroke-width="1.200" d="M400 327.500h347"/>
      <path stroke="#a8794e" stroke-width="1.300" d="M714 794V293.500h734V794M747 794V327.500h668V794"/>
      <rect x="1415" y="327.500" width="50" height="16" stroke="#d8d8d8" stroke-width="1.200"/>
      <path stroke="#0a8a0a" d="M1468 374l94-95"/>
      <path stroke="#10c010" stroke-width="1.500" d="M1454 332l116-19M1549 293.500h21M1549 327.500h21"/>
      <path stroke="#c00000" stroke-width="1.200" d="M1515.500 148v252"/>
      <path stroke="#0a6a0a" stroke-width="1.200" d="M1515.500 400v70"/>
      <path stroke="#c00000" stroke-width="1.200" d="M1515.500 470v499"/>
      <circle cx="1515" cy="160" r="11" stroke="#0a7a0a" stroke-width="1.200"/>
      <text x="1515" y="168" text-anchor="middle" font-family="Lato" font-weight="300" font-size="21" fill="#fff">B</text>

      <text class="cad" x="962" y="179" textLength="186" lengthAdjust="spacingAndGlyphs">5.300</text>
      <text class="cad" x="416" y="681" textLength="178" lengthAdjust="spacingAndGlyphs">5.100</text>
      <text class="cad" x="1178" y="603" textLength="174" lengthAdjust="spacingAndGlyphs">3.100</text>
      <text class="cad" x="992" y="551" textLength="92" lengthAdjust="spacingAndGlyphs" transform="rotate(-28 992 551)" style="font-size:100px">2%</text>
      <text class="cad" x="1603" y="677" textLength="150" lengthAdjust="spacingAndGlyphs" transform="rotate(-90 1603 677)">1400</text>
      <text class="cad" x="1603" y="263" textLength="112" lengthAdjust="spacingAndGlyphs" transform="rotate(-90 1603 263)">100</text>
      <text class="cad" x="1167" y="1006" textLength="129" lengthAdjust="spacingAndGlyphs" transform="rotate(-90 1167 1006)">025</text>

      <path stroke="#00d000" stroke-width="1.200" d="M929 632l322-204M400 715.500h297"/>
      <path stroke="#10d810" stroke-width="1.200" d="M1455 638H1011l99 100 100-100"/>
      <text x="778" y="720" textLength="136" lengthAdjust="spacingAndGlyphs" font-family="Roboto" font-size="104" fill="#fff" stroke="#fff" stroke-width="1.200">0;6</text>
      <path stroke="#fff" stroke-width="2.500" d="M648 794l133-50h400"/>

      <path stroke="#d8b060" stroke-width="1.300" d="M400 794.500h1048"/>
      <path stroke="#e8a0c0" stroke-width="2" d="M1448 794.500h100"/>
      <path stroke="#70c070" stroke-width="2" d="M1548 794.500h53"/>
      <path stroke="#ee2020" stroke-width="2" d="M597 794v100M622.500 794v100M648 794v100M914 794v100M939 794v100M964 794v100"/>
      <path stroke="#e82020" stroke-width="1.500" d="M400 828h803M1348 828h253"/>
      <path stroke="#10f010" stroke-width="2" d="M1203 828h145M1271 812l32 31"/>
      <path stroke="#a8e048" stroke-width="2" d="M400 861h1048"/>
      <path stroke="#d090e0" stroke-width="2" d="M1515 861h86"/>
      <path stroke="#e8e8e8" stroke-width="2.500" d="M400 844h1082v125M780 844v125"/>
      <path stroke="#f040e0" stroke-width="3" d="M547 844h-33v125M1282 844h-34v125"/>
      <path stroke="#f8f020" stroke-width="3" d="M1014 844v125"/>
      <path stroke="#30e030" stroke-width="1.200" d="M1286 844v125"/>
      <path stroke="#c020d0" stroke-width="1.200" d="M1344 969l99-104"/>
      <circle cx="1442" cy="867" r="3" stroke="#c020d0"/>
      <path stroke="#e8c090" stroke-width="1.200" d="M1448 794v175M1515 861v108"/>
      <path stroke="#a070d8" d="M1549 861v44M1515 904.500h42"/>
      <path stroke="#f0c890" stroke-width="3" d="M1449 794l152 156"/>
      <path stroke="#fff" stroke-width="1.500" d="M1448 794l153 156"/>

      <circle cx="412" cy="828" r="12" stroke="#0a7a0a" stroke-width="1.200"/>
      <text x="412" y="835" text-anchor="middle" font-family="Lato" font-weight="300" font-size="20" fill="#fff">1</text>
      <ellipse cx="1589" cy="828" rx="11" ry="12" stroke="#0a7a0a" stroke-width="1.200"/>
      <text x="1589" y="835" text-anchor="middle" font-family="Lato" font-weight="300" font-size="20" fill="#fff">1</text>

      <path fill="#00e000" d="M447 941v-20h-3l6-10 6 10h-3v20z"/>
      <path fill="#f00000" d="M450 938h20v-4l10 7-10 7v-4h-20z"/>
      <circle cx="450" cy="941" r="5.500" fill="#0000c0"/>
      <text x="450" y="912" text-anchor="middle" font-family="Lato" font-weight="300" font-size="15" fill="#20d020">Y</text>
      <text x="486" y="947" text-anchor="middle" font-family="Lato" font-weight="300" font-size="15" fill="#f00000">X</text>
      <rect x="400" y="964" width="1201" height="5" fill="#000" fill-opacity=".22"/>
    </svg>
    <div class="float-bar">
      <svg class="ico"><use href="#i-orbit"/></svg>
      <svg class="ico"><use href="#i-3d"/></svg>
      <svg class="ico"><use href="#i-cube"/></svg>
      <i class="caret"></i>
      <svg class="ico"><use href="#i-cube2"/></svg>
      <i class="caret"></i>
      <svg class="ico"><use href="#i-frame"/></svg>
      <svg class="ico"><use href="#i-dashcube"/></svg>
      <hr>
      <svg class="ico"><use href="#i-listeye"/></svg>
    </div>
  </div>
  <div class="gut ms-0" style="width:5px"><div class="gut-mark" style="width:5px"></div></div>

  <div class="show-pane">
    <div class="gray-head"></div>
    <div class="show-title">显示设置</div>
    <ul class="nav nav-tabs show-tabs">
      <li class="nav-item"><a class="nav-link active" href="#">图元显示</a></li>
      <li class="nav-item"><a class="nav-link idle" href="#">楼层显示</a></li>
    </ul>
    <table class="layer-table">
      <colgroup><col style="width:146px"><col style="width:63px"><col style="width:51px"></colgroup>
      <tr><th>图层构件</th><th class="hd">显示图元</th><th>显示</th></tr>
      <tr><td class="layer-name root"><span class="plus">−</span>所有构件</td><td class="mid"><input class="form-check-input ck part" type="checkbox"></td><td></td></tr>
      <tr><td class="layer-name"><span class="plus">+</span>施工段</td><td class="mid"><input class="form-check-input ck part" type="checkbox"></td><td></td></tr>
      <tr><td class="layer-name"><span class="plus">+</span>轴线</td><td class="mid"><input class="form-check-input ck" type="checkbox" checked></td><td></td></tr>
      <tr><td class="layer-name"><span class="plus">+</span>柱</td><td class="mid"><input class="form-check-input ck part" type="checkbox"></td><td></td></tr>
      <tr><td class="layer-name"><span class="plus">+</span>墙</td><td class="mid"><input class="form-check-input ck part" type="checkbox"></td><td></td></tr>
      <tr><td class="layer-name"><span class="plus">+</span>门窗洞</td><td class="mid"><input class="form-check-input ck part" type="checkbox"></td><td></td></tr>
      <tr><td class="layer-name"><span class="plus">+</span>梁</td><td class="mid cur"><input class="form-check-input ck" type="checkbox" checked></td><td></td></tr>
      <tr><td class="layer-name"><span class="plus">+</span>板</td><td class="mid"><input class="form-check-input ck part" type="checkbox"></td><td></td></tr>
      <tr><td class="layer-name"><span class="plus">+</span>装配式</td><td class="mid"><input class="form-check-input ck part" type="checkbox"></td><td></td></tr>
      <tr><td class="layer-name"><span class="plus">+</span>空心楼盖</td><td class="mid"><input class="form-check-input ck part" type="checkbox"></td><td></td></tr>
      <tr><td class="layer-name"><span class="plus">+</span>楼梯</td><td class="mid"><input class="form-check-input ck" type="checkbox"></td><td></td></tr>
      <tr><td class="layer-name"><span class="plus">+</span>装修</td><td class="mid"><input class="form-check-input ck" type="checkbox"></td><td></td></tr>
      <tr><td class="layer-name"><span class="plus">+</span>土方</td><td class="mid"><input class="form-check-input ck" type="checkbox"></td><td></td></tr>
      <tr><td class="layer-name"><span class="plus">+</span>基础</td><td class="mid"><input class="form-check-input ck part" type="checkbox"></td><td></td></tr>
      <tr><td class="layer-name"><span class="plus">+</span>其它</td><td class="mid"><input class="form-check-input ck part" type="checkbox"></td><td></td></tr>
      <tr><td class="layer-name"><span class="plus">+</span>自定义</td><td class="mid"><input class="form-check-input ck part" type="checkbox"></td><td></td></tr>
    </table>
    <div class="tail-line"></div>
    <div class="reset-btn">恢复默认</div>
  </div>
</div>

<svg class="ink" width="1843" height="130" viewBox="0 0 1843 130" fill="none">
  <path stroke="#f01010" stroke-width="4.500" stroke-linecap="round" stroke-linejoin="round" d="M897 103L904 107.500Q911 112 919.500 115.500Q928 119 939 119Q950 119 955 115.500Q960 112 965 102Q970 92 976 82Q982 72 985 62.500Q988 53 985 41.500Q982 30 973 23Q964 16 950 14.500Q936 13 923.500 20Q911 27 902 35Q893 43 889 51.500Q885 60 884 67.500Q883 75 889 87"/>
</svg>
<script src="https://cdn.jsdelivr.net/npm/bootstrap@5.3.3/dist/js/bootstrap.bundle.min.js"></script>
</body>
</html>
